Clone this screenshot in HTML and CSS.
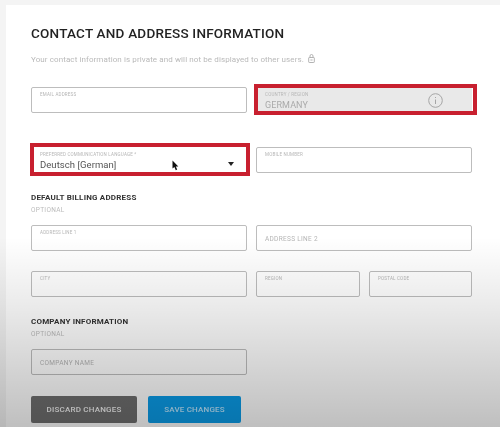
FILE: index.html
```html
<!DOCTYPE html>
<html lang="en">
<head>
  <meta charset="UTF-8" />
  <title>Contact and address information</title>
  <link rel="stylesheet" href="styles.css">
</head>
<body>

<div class="card">
  <h1 class="title">CONTACT AND ADDRESS INFORMATION</h1>
  <p class="note">
    Your contact information is private and will not be displayed to other users.
    <svg class="lock" width="7" height="9" viewBox="0 0 7 9" fill="none" stroke="#aaa" stroke-width="0.9">
      <rect x="0.7" y="3.5" width="5.6" height="5" rx="0.6" />
      <path d="M2 3.5V2a1.5 1.5 0 0 1 3 0v1.5" />
      <path d="M2.4 6h2.2" />
    </svg>
  </p>

  <div class="fields fields-top">
    <div class="field"><span class="label">EMAIL ADDRESS</span></div>
    <div class="field field-wide field-disabled marked marked-country">
      <span class="label">COUNTRY / REGION</span>
      <span class="value value-disabled">GERMANY</span>
      <svg class="info" width="15" height="15" viewBox="0 0 15 15" fill="none" stroke="#a5a5a5">
        <circle cx="7.5" cy="7.5" r="6.8" />
        <path d="M7.5 4v1M7.5 6.5v4.5" />
      </svg>
    </div>
    <div class="field marked marked-language">
      <span class="label">PREFERRED COMMUNICATION LANGUAGE *</span>
      <span class="value">Deutsch [German]</span>
      <span class="arrow"></span>
      <svg class="pointer" width="7" height="11" viewBox="0 0 7 11" fill="#111">
        <path d="M0.5 0.5V8.5L2.4 6.9L3.8 10.2L5.2 9.6L3.8 6.4H6.3Z" />
      </svg>
    </div>
    <div class="field field-wide"><span class="label">MOBILE NUMBER</span></div>
  </div>

  <h2 class="subtitle">DEFAULT BILLING ADDRESS</h2>
  <p class="optional">OPTIONAL</p>
  <div class="fields fields-billing">
    <div class="field"><span class="label">ADDRESS LINE 1</span></div>
    <div class="field field-wide"><span class="placeholder">ADDRESS LINE 2</span></div>
    <div class="field"><span class="label">CITY</span></div>
    <div class="field"><span class="label">REGION</span></div>
    <div class="field"><span class="label">POSTAL CODE</span></div>
  </div>

  <h2 class="subtitle">COMPANY INFORMATION</h2>
  <p class="optional">OPTIONAL</p>
  <div class="fields fields-billing">
    <div class="field"><span class="placeholder">COMPANY NAME</span></div>
  </div>

  <div class="actions">
    <button class="btn btn-discard">DISCARD CHANGES</button>
    <button class="btn btn-save">SAVE CHANGES</button>
  </div>
</div>

<div class="fade"></div>

</body>
</html>
```

FILE: styles.css
```css
body {
  margin: 0;
  height: 427px;
  overflow: hidden;
  position: relative;
  background: #f4f4f4;
  font-family: Roboto, "Liberation Sans", sans-serif;
}

.card {
  margin: 5px 0 0 6px;
  height: 422px;
  padding: 19px 0 0 25px;
  box-sizing: border-box;
  background: #fff;
  filter: blur(0.45px);
}

.title {
  margin: 0;
  font-size: 13.5px;
  line-height: 18px;
  font-weight: 500;
  letter-spacing: 0.22px;
  color: #222;
}

.note {
  margin: 12px 0 21px;
  font-size: 8px;
  line-height: 12px;
  letter-spacing: 0.1px;
  color: #b9b9b9;
}

.lock {
  vertical-align: -1px;
  margin-left: 2px;
}

.fields {
  display: grid;
  grid-template-columns: 216px 104px 103px;
  column-gap: 9px;
  grid-auto-rows: 26px;
}

.fields-top {
  row-gap: 34px;
}

.fields-billing {
  row-gap: 20px;
}

.field {
  position: relative;
  box-sizing: border-box;
  border: 1px solid #bdbdbd;
  border-radius: 2px;
  padding: 4px 8px 0;
}

.field-wide {
  grid-column: span 2;
}

.field-disabled {
  background: #e9e9e9;
}

.label {
  display: block;
  font-size: 4.5px;
  line-height: 6px;
  letter-spacing: 0.2px;
  color: #b5b5b5;
  white-space: nowrap;
}

.placeholder {
  display: block;
  margin-top: 3px;
  font-size: 6.5px;
  line-height: 12px;
  letter-spacing: 0.3px;
  color: #b5b5b5;
}

.value {
  display: block;
  margin-top: 1px;
  font-size: 9.5px;
  line-height: 12px;
  letter-spacing: 0.05px;
  color: #555;
}

.value-disabled {
  font-size: 9px;
  letter-spacing: 0.1px;
  color: #aaa;
}

.info {
  position: absolute;
  top: 5px;
  right: 28px;
}

.arrow {
  position: absolute;
  top: 14px;
  right: 12px;
  border-top: 4px solid #222;
  border-left: 3.5px solid transparent;
  border-right: 3.5px solid transparent;
}

.pointer {
  position: absolute;
  top: 12px;
  left: 140px;
}

.marked {
  border-color: transparent;
}

.marked::after {
  content: "";
  position: absolute;
  border: 4px solid #c8202f;
  pointer-events: none;
}

.marked-country::after {
  inset: -4px -6px -3px -3px;
}

.marked-language::after {
  inset: -5px -4px -4px -2px;
}

.subtitle {
  margin: 19px 0 0;
  font-size: 8px;
  line-height: 12px;
  font-weight: 700;
  letter-spacing: 0.2px;
  color: #333;
}

.optional {
  margin: 0 0 9px;
  font-size: 6.5px;
  line-height: 12px;
  letter-spacing: 0.3px;
  color: #bbb;
}

.actions {
  display: flex;
  gap: 11px;
  margin-top: 21px;
}

.btn {
  height: 27px;
  padding: 0;
  border: 0;
  border-radius: 2px;
  font-family: inherit;
  font-size: 8px;
  font-weight: 500;
  letter-spacing: 0.2px;
}

.btn-discard {
  width: 106px;
  background: #6e6e6e;
  color: #f2f2f2;
}

.btn-save {
  width: 93px;
  background: #0a9ce8;
  color: #b9e6ff;
}

.fade {
  position: absolute;
  left: 0;
  right: 0;
  bottom: 0;
  height: 190px;
  background: linear-gradient(rgba(0, 0, 0, 0), rgba(0, 0, 0, 0.08) 35%, rgba(0, 0, 0, 0.25));
  pointer-events: none;
}
```
